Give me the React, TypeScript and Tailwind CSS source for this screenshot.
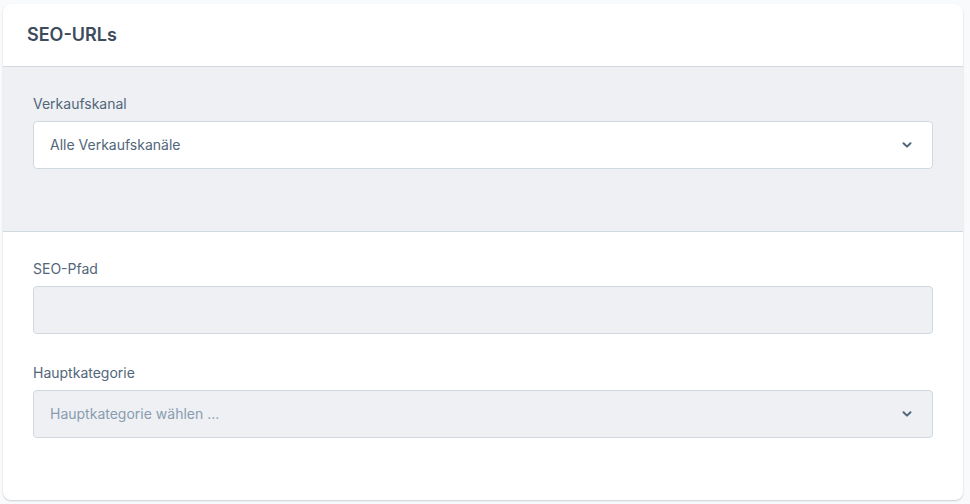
import React from "react";

const Chevron = () => (
  <svg width="10" height="6" viewBox="0 0 10 6" fill="none" className="text-[#52667a]">
    <path d="M1.5 1.2 5 4.6 8.5 1.2" stroke="currentColor" strokeWidth="2" strokeLinecap="round" strokeLinejoin="round" />
  </svg>
);

const Field = ({ label, children }: { label: string; children: React.ReactNode }) => (
  <div>
    <label className="block text-sm leading-5 text-[#52667a] mb-[7px]">{label}</label>
    {children}
  </div>
);

export default function App() {
  return (
    <div className="min-h-[504px] bg-[#f9fafb] pt-1 pl-[3px] pr-[7px] pb-1" style={{ fontFamily: "Inter, 'Noto Sans', sans-serif" }}>
      <div className="w-[960px] bg-white rounded-lg shadow-[0_1px_2px_rgba(0,0,0,0.18)] overflow-hidden">
        <div className="h-[63px] flex items-center px-6 border-b border-[#d1d9e0]">
          <h2 className="text-lg font-semibold text-[#3d4b5c]">SEO-URLs</h2>
        </div>

        <div className="bg-[#eef0f4] px-[30px] pt-[27px] pb-[62px] border-b border-[#d1d9e0]">
          <Field label="Verkaufskanal">
            <div className="h-12 bg-white border border-[#d1d9e0] rounded flex items-center justify-between pl-4 pr-[20px]">
              <span className="text-sm text-[#52667a]">Alle Verkaufskanäle</span>
              <Chevron />
            </div>
          </Field>
        </div>

        <div className="px-[30px] pt-[27px] pb-[62px] flex flex-col gap-[29px]">
          <Field label="SEO-Pfad">
            <div className="h-12 bg-[#eef0f4] border border-[#d1d9e0] rounded" />
          </Field>
          <Field label="Hauptkategorie">
            <div className="h-12 bg-[#eef0f4] border border-[#d1d9e0] rounded flex items-center justify-between pl-4 pr-[20px]">
              <span className="text-sm text-[#8a9cb0]">Hauptkategorie wählen ...</span>
              <Chevron />
            </div>
          </Field>
        </div>
      </div>
    </div>
  );
}
